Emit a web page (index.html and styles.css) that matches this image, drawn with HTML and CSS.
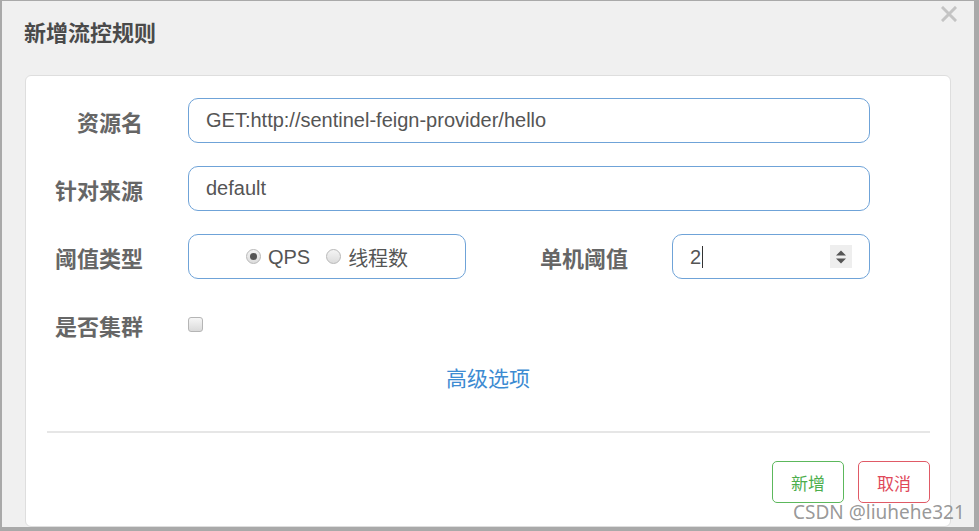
FILE: index.html
```html
<!DOCTYPE html>
<html lang="zh-CN">
<head>
    <meta charset="UTF-8">
    <title>新增流控规则</title>
    <link rel="stylesheet" href="styles.css">
</head>
<body>
    <div class="modal">
        <div class="modal-header">
            <h3 class="modal-title">新增流控规则</h3>
            <span class="close">
                <svg width="16" height="16" viewBox="0 0 16 16">
                    <path d="M2 2 L14 14 M14 2 L2 14" stroke="#c4c4c4" stroke-width="3" stroke-linecap="square"/>
                </svg>
            </span>
        </div>
        <div class="card">
            <div class="form-row">
                <label class="form-label">资源名</label>
                <input class="form-input wide" type="text" value="GET:http://sentinel-feign-provider/hello">
            </div>
            <div class="form-row">
                <label class="form-label">针对来源</label>
                <input class="form-input wide" type="text" value="default">
            </div>
            <div class="form-row">
                <label class="form-label">阈值类型</label>
                <div class="form-input radio-box">
                    <span class="radio checked"></span><span class="radio-text">QPS</span>
                    <span class="radio"></span><span class="radio-text">线程数</span>
                </div>
                <label class="form-label second">单机阈值</label>
                <div class="form-input number-box">
                    <span class="number-value">2</span><span class="caret"></span>
                    <span class="spinner">
                        <svg width="12" height="16" viewBox="0 0 12 16">
                            <path d="M1 6.5 L6 1.5 L11 6.5 Z" fill="#555"/>
                            <path d="M1 9.5 L6 14.5 L11 9.5 Z" fill="#555"/>
                        </svg>
                    </span>
                </div>
            </div>
            <div class="form-row short">
                <label class="form-label">是否集群</label>
                <span class="checkbox"></span>
            </div>
            <div class="advanced"><a href="#">高级选项</a></div>
            <hr class="divider">
            <div class="footer">
                <button class="btn btn-ok">新增</button>
                <button class="btn btn-cancel">取消</button>
            </div>
        </div>
    </div>
    <div class="watermark">CSDN @liuhehe321</div>
</body>
</html>
```

FILE: styles.css
```css
body {
    margin: 0;
    background-color: #a9a9a9;
    font-family: 'Liberation Sans', 'Noto Sans CJK SC', sans-serif;
    width: 979px;
    height: 531px;
    overflow: hidden;
    position: relative;
}
.modal {
    margin: 1px 0 0 2px;
    width: 972px;
    height: 526px;
    background-color: #f0f0f0;
    display: flex;
    flex-direction: column;
}
.modal-header {
    height: 74px;
    display: flex;
    justify-content: space-between;
    align-items: flex-start;
    padding: 0 17px 0 22px;
    box-sizing: border-box;
}
.modal-title {
    margin: 15px 0 0 0;
    font-family: 'Noto Sans CJK SC', sans-serif;
    font-size: 22px;
    line-height: 30px;
    font-weight: bold;
    color: #4a4a4a;
}
.close {
    margin-top: 5px;
    display: flex;
}
.card {
    flex: 1;
    margin: 0 23px;
    background: #fff;
    border: 1px solid #dedede;
    border-radius: 6px;
    padding: 22px 20px 0 0;
}
.form-row {
    display: flex;
    align-items: center;
    height: 45px;
    margin-bottom: 23px;
}
.form-row.short {
    height: 30px;
    margin-top: 31px;
    margin-bottom: 0;
}
.form-label {
    width: 117px;
    margin-right: 45px;
    text-align: right;
    font-family: 'Noto Sans CJK SC', sans-serif;
    font-size: 22px;
    font-weight: bold;
    color: #666;
}
.form-label.second {
    margin-left: 45px;
    margin-right: 44px;
}
.form-input {
    height: 45px;
    box-sizing: border-box;
    border: 1px solid #6fa3d8;
    border-radius: 10px;
    padding: 0 17px;
    font-family: 'Liberation Sans', 'Noto Sans CJK SC', sans-serif;
    font-size: 20px;
    color: #555;
    background: #fff;
    outline: none;
}
.wide {
    width: 682px;
}
.radio-box {
    width: 278px;
    display: flex;
    align-items: center;
    justify-content: center;
    padding: 0;
}
.radio {
    width: 15px;
    height: 15px;
    box-sizing: border-box;
    border-radius: 50%;
    border: 1px solid #b8b8b8;
    background: linear-gradient(#f4f4f4, #dcdcdc);
    margin-right: 7px;
    position: relative;
}
.radio.checked::after {
    content: '';
    position: absolute;
    left: 3px;
    top: 3px;
    width: 7px;
    height: 7px;
    border-radius: 50%;
    background: #555;
}
.radio-text {
    margin-right: 16px;
    margin-top: 2px;
    font-family: 'Liberation Sans', 'Noto Sans CJK SC', sans-serif;
}
.radio-text:last-child {
    margin-right: 0;
}
.number-box {
    width: 198px;
    display: flex;
    align-items: center;
}
.number-value {
    margin-top: 1px;
}
.caret {
    width: 1px;
    height: 22px;
    background: #333;
    margin-left: 1px;
}
.spinner {
    margin-left: auto;
    width: 22px;
    height: 23px;
    background: #eee;
    display: flex;
    align-items: center;
    justify-content: center;
}
.checkbox {
    width: 15px;
    height: 15px;
    box-sizing: border-box;
    border: 1px solid #b5b5b5;
    border-radius: 3px;
    background: linear-gradient(#f6f6f6, #dadada);
    margin-top: -2px;
}
.advanced {
    text-align: center;
    margin-top: 21px;
    padding-left: 20px;
    line-height: 32px;
}
.advanced a {
    font-family: 'Noto Sans CJK SC', sans-serif;
    font-size: 21px;
    color: #3d8bd2;
    text-decoration: none;
}
.divider {
    margin: 34px 0 0 21px;
    border: none;
    height: 2px;
    background: #e6e6e6;
}
.footer {
    display: flex;
    justify-content: flex-end;
    gap: 14px;
    margin-top: 28px;
}
.btn {
    width: 72px;
    height: 42px;
    background: #fff;
    border-radius: 5px;
    font-family: 'Noto Sans CJK SC', sans-serif;
    font-size: 17px;
    cursor: pointer;
}
.btn-ok {
    border: 1px solid #5cb85c;
    color: #4cae4c;
}
.btn-cancel {
    border: 1px solid #e05a66;
    color: #e0485a;
}
.watermark {
    position: absolute;
    left: 793px;
    top: 499px;
    font-family: 'Noto Sans', sans-serif;
    font-size: 19px;
    color: rgba(140, 140, 140, 0.9);
    white-space: nowrap;
}
```
